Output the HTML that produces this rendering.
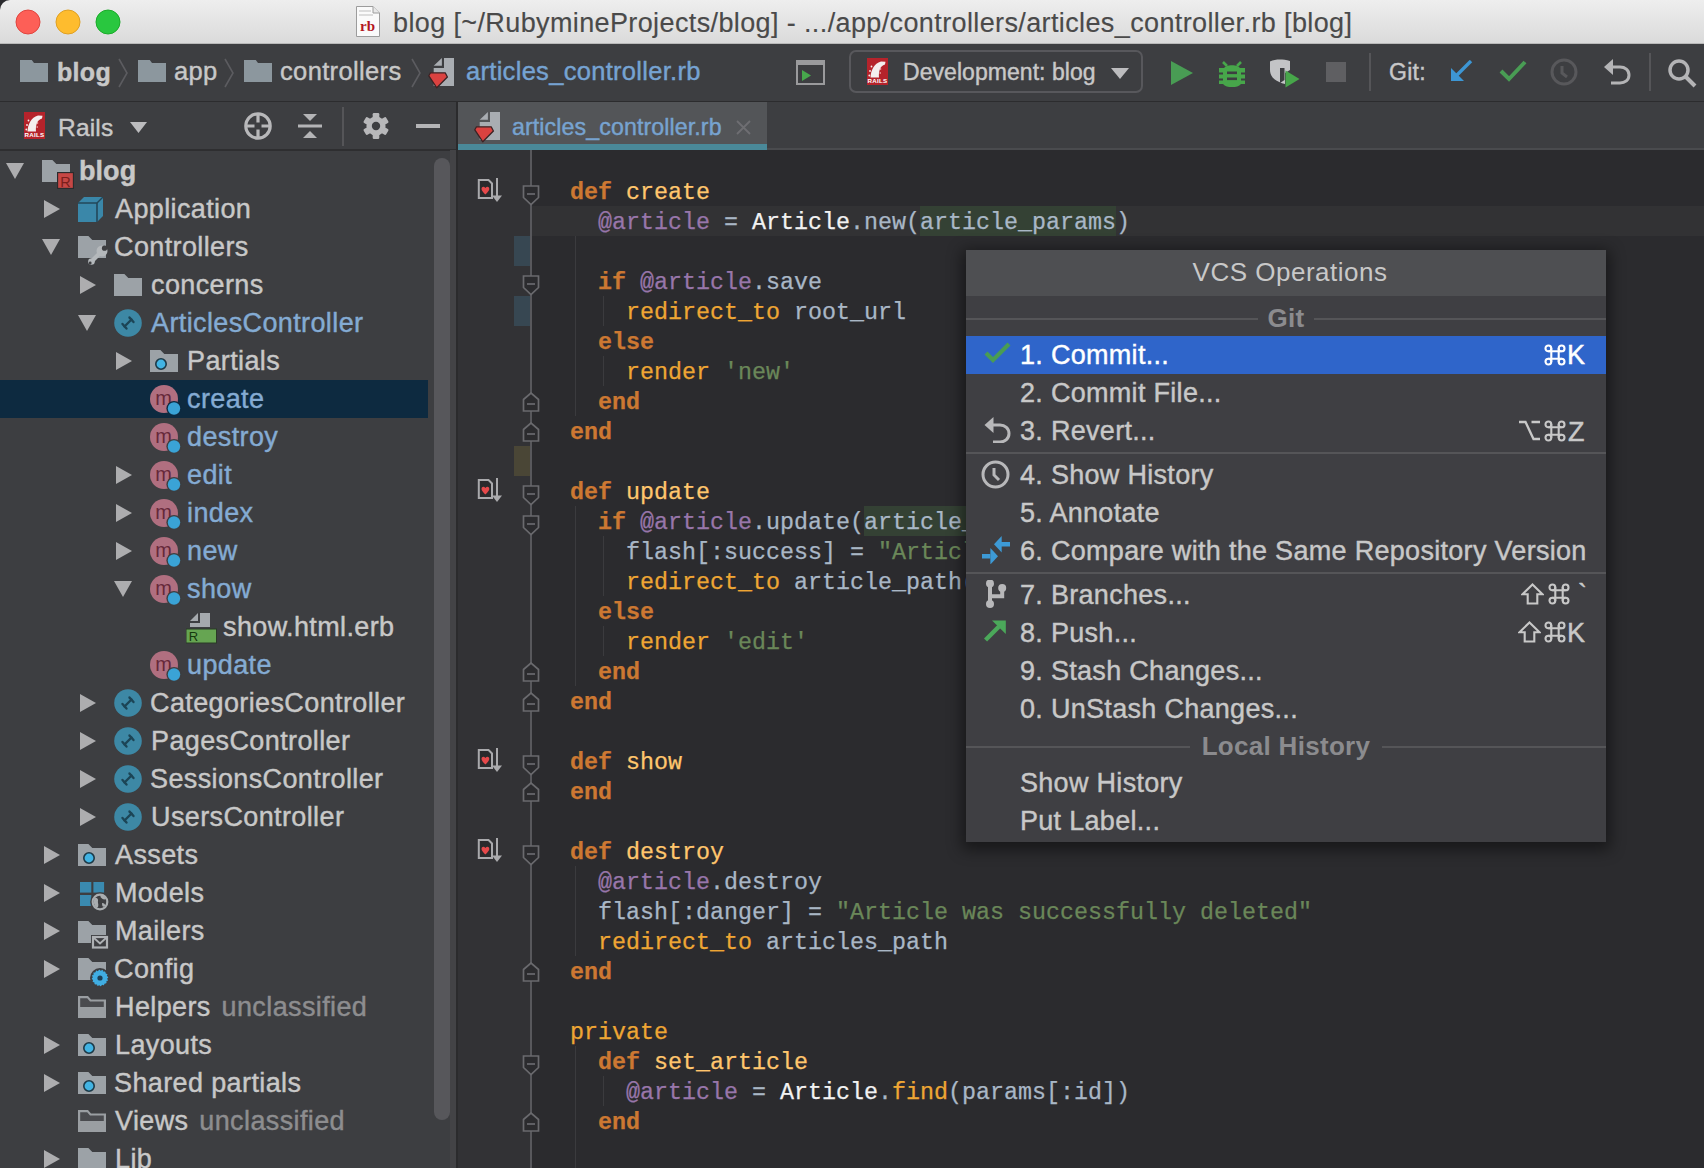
<!DOCTYPE html><html><head><meta charset="utf-8"><title>RubyMine</title></head><body style="margin:0;width:1704px;height:1168px;overflow:hidden;position:relative;background:#2b2b2e;font-family:'Liberation Sans', sans-serif"><div style="position:absolute;left:0px;top:0px;width:1704px;height:44px;background:linear-gradient(#eeeeee,#dadada);border-radius:10px 0 0 0;"></div>
<div style="position:absolute;left:0px;top:43px;width:1704px;height:1px;background:#b9b9b9"></div>
<svg style="position:absolute;left:15px;top:9px" width="26" height="26" viewBox="0 0 26 26"><circle cx="13" cy="13" r="12" fill="#fd5f57" stroke="#e0443e" stroke-width="1"/></svg>
<svg style="position:absolute;left:55px;top:9px" width="26" height="26" viewBox="0 0 26 26"><circle cx="13" cy="13" r="12" fill="#febc2e" stroke="#dfa023" stroke-width="1"/></svg>
<svg style="position:absolute;left:95px;top:9px" width="26" height="26" viewBox="0 0 26 26"><circle cx="13" cy="13" r="12" fill="#29c73f" stroke="#1aab29" stroke-width="1"/></svg>
<svg style="position:absolute;left:356px;top:6px" width="24" height="31" viewBox="0 0 24 31"><path d="M0.5 0.5 H17 L23.5 7 V30.5 H0.5 Z" fill="#fafafa" stroke="#9c9c9c"/><path d="M17 0.5 V7 H23.5" fill="#e8e8e8" stroke="#9c9c9c"/><rect x="3" y="4" width="12" height="2" fill="#dcdcdc"/><rect x="3" y="8" width="14" height="2" fill="#dcdcdc"/><text x="11.5" y="25" font-family="Liberation Serif" font-weight="bold" font-size="15" fill="#b3161e" text-anchor="middle">rb</text></svg>
<div style="position:absolute;left:393px;top:7.16px;font-family:'Liberation Sans', sans-serif;font-size:27px;line-height:32.40px;height:32.40px;color:#4a4a4a;font-weight:normal;letter-spacing:0.38px;white-space:pre;-webkit-text-stroke:0.15px #4a4a4a;">blog [~/RubymineProjects/blog] - .../app/controllers/articles_controller.rb [blog]</div>
<div style="position:absolute;left:0px;top:44px;width:1704px;height:57px;background:#3d3e41"></div>
<div style="position:absolute;left:0px;top:101px;width:1704px;height:1px;background:#2c2c2e"></div>
<svg style="position:absolute;left:20px;top:60px" width="28" height="22" viewBox="0 0 28 22"><defs><linearGradient id="fg" x1="0" y1="0" x2="1" y2="1"><stop offset="0" stop-color="#8a959c"/><stop offset="1" stop-color="#8e9296"/></linearGradient></defs><path d="M0 0 H11.8 L14.0 3 H28 V22 H0 Z" fill="#8c979e"/></svg>
<div style="position:absolute;left:57px;top:56.88px;font-family:'Liberation Sans', sans-serif;font-size:25px;line-height:30.00px;height:30.00px;color:#c8c8c8;font-weight:bold;letter-spacing:0.3px;white-space:pre;-webkit-text-stroke:0.42px #c8c8c8;">blog</div>
<svg style="position:absolute;left:118px;top:58px" width="10" height="30" viewBox="0 0 10 30"><path d="M1 1 L9 15 L1 29" fill="none" stroke="#5c5c60" stroke-width="1.6"/></svg>
<svg style="position:absolute;left:138px;top:60px" width="28" height="22" viewBox="0 0 28 22"><defs><linearGradient id="fg" x1="0" y1="0" x2="1" y2="1"><stop offset="0" stop-color="#8a959c"/><stop offset="1" stop-color="#8e9296"/></linearGradient></defs><path d="M0 0 H11.8 L14.0 3 H28 V22 H0 Z" fill="#8c979e"/></svg>
<div style="position:absolute;left:174px;top:56.42px;font-family:'Liberation Sans', sans-serif;font-size:25.5px;line-height:30.60px;height:30.60px;color:#c8c8c8;font-weight:normal;letter-spacing:0.3px;white-space:pre;-webkit-text-stroke:0.42px #c8c8c8;">app</div>
<svg style="position:absolute;left:224px;top:58px" width="10" height="30" viewBox="0 0 10 30"><path d="M1 1 L9 15 L1 29" fill="none" stroke="#5c5c60" stroke-width="1.6"/></svg>
<svg style="position:absolute;left:244px;top:60px" width="28" height="22" viewBox="0 0 28 22"><defs><linearGradient id="fg" x1="0" y1="0" x2="1" y2="1"><stop offset="0" stop-color="#8a959c"/><stop offset="1" stop-color="#8e9296"/></linearGradient></defs><path d="M0 0 H11.8 L14.0 3 H28 V22 H0 Z" fill="#8c979e"/></svg>
<div style="position:absolute;left:280px;top:56.42px;font-family:'Liberation Sans', sans-serif;font-size:25.5px;line-height:30.60px;height:30.60px;color:#c8c8c8;font-weight:normal;letter-spacing:0.35px;white-space:pre;-webkit-text-stroke:0.42px #c8c8c8;">controllers</div>
<svg style="position:absolute;left:411px;top:58px" width="10" height="30" viewBox="0 0 10 30"><path d="M1 1 L9 15 L1 29" fill="none" stroke="#5c5c60" stroke-width="1.6"/></svg>
<svg style="position:absolute;left:428px;top:58px" width="27" height="31" viewBox="0 0 27 31"><path d="M16 0 H26 V28 H16 Z" fill="#a9adb2"/><path d="M5.7 7.7 L13.9 0 V7.7 Z" fill="#a9adb2"/><path d="M5.7 10 H16 V28 H5.7 Z" fill="#a9adb2"/><path d="M0.8 17.8 L2.5 14.8 H17.2 L19.4 19 L8.8 29.8 Z" fill="#db4240" stroke="#3b2324" stroke-width="1.3" stroke-linejoin="round"/></svg>
<div style="position:absolute;left:466px;top:56.42px;font-family:'Liberation Sans', sans-serif;font-size:25.5px;line-height:30.60px;height:30.60px;color:#76a3d2;font-weight:normal;letter-spacing:0.3px;white-space:pre;-webkit-text-stroke:0.42px #76a3d2;">articles_controller.rb</div>
<svg style="position:absolute;left:796px;top:60px" width="29" height="25" viewBox="0 0 29 25"><rect x="1" y="1" width="27" height="23" fill="none" stroke="#9a9a9c" stroke-width="2"/><rect x="1" y="1" width="27" height="4" fill="#9a9a9c"/><path d="M6 10 L15 15.5 L6 21 Z" fill="#47a84c"/></svg>
<div style="position:absolute;left:849px;top:50px;width:294px;height:43px;box-sizing:border-box;border:2px solid #58585c;border-radius:7px;"></div>
<svg style="position:absolute;left:867px;top:58px" width="21" height="27" viewBox="0 0 21 27"><rect x="0" y="0" width="21" height="27" fill="#b5232b"/><path d="M3.5 19.5 C4 12 7 5.5 14 3.5 L18.5 3.8 L18 6.5 C13 8 11.5 13 12 19.5 Z" fill="#f4eeee"/><circle cx="4.5" cy="8.5" r="0.9" fill="#f4eeee"/><circle cx="3" cy="13" r="0.9" fill="#f4eeee"/><circle cx="2.3" cy="17.5" r="0.9" fill="#f4eeee"/><circle cx="13.5" cy="11" r="0.8" fill="#f7c0c0"/><circle cx="13.2" cy="15" r="0.8" fill="#f7c0c0"/><text x="10.5" y="25.4" font-family="Liberation Sans" font-weight="bold" font-size="6.2" fill="#fff" text-anchor="middle" letter-spacing="0.3">RAILS</text></svg>
<div style="position:absolute;left:903px;top:59.39px;font-family:'Liberation Sans', sans-serif;font-size:23px;line-height:27.60px;height:27.60px;color:#c8c8c8;font-weight:normal;letter-spacing:0.05px;white-space:pre;-webkit-text-stroke:0.42px #c8c8c8;">Development: blog</div>
<svg style="position:absolute;left:1111px;top:68px" width="18" height="11" viewBox="0 0 18 11"><path d="M0 0 H18 L9.0 11 Z" fill="#bcbcbe"/></svg>
<svg style="position:absolute;left:1171px;top:61px" width="22" height="24" viewBox="0 0 22 24"><path d="M0 0 L22 12 L0 24 Z" fill="#499c54"/></svg>
<svg style="position:absolute;left:1219px;top:57px" width="26" height="30" viewBox="0 0 26 30"><g fill="#47a64a"><path d="M4 5 L8 9 M22 5 L18 9" stroke="#47a64a" stroke-width="2.6"/><path d="M5 12 C5 7 21 7 21 12 Z"/><path d="M0 11 H26 V27 H22 C20 29.5 17 30 13 30 C9 30 6 29.5 4 27 H0 Z"/></g><g fill="#3d3e41"><rect x="0" y="15.5" width="4" height="2"/><rect x="22" y="15.5" width="4" height="2"/><rect x="0" y="21.5" width="4" height="2"/><rect x="22" y="21.5" width="4" height="2"/><rect x="8" y="14.5" width="10" height="2.6"/><rect x="8" y="20.5" width="10" height="2.6"/></g></svg>
<svg style="position:absolute;left:1269px;top:59px" width="32" height="30" viewBox="0 0 32 30"><path d="M1 2.5 C7 0 13 0 21 2 V11 L16 14 V25 C8 23 1 19 1 11 Z" fill="#c3c4c6"/><path d="M11 9 H15.5 V21 L11 24 Z" fill="#3d3e41"/><path d="M16.5 11.5 L30.5 20 L16.5 28.5 Z" fill="#47a64a"/></svg>
<div style="position:absolute;left:1326px;top:62px;width:20px;height:20px;background:#5f5f62"></div>
<div style="position:absolute;left:1369px;top:53px;width:1.5px;height:38px;background:#555558"></div>
<div style="position:absolute;left:1389px;top:59.39px;font-family:'Liberation Sans', sans-serif;font-size:23px;line-height:27.60px;height:27.60px;color:#c8c8c8;font-weight:normal;letter-spacing:0.3px;white-space:pre;-webkit-text-stroke:0.42px #c8c8c8;">Git:</div>
<svg style="position:absolute;left:1449px;top:60px" width="24" height="23" viewBox="0 0 24 23"><path d="M22 1 L6 17" stroke="#3d96d4" stroke-width="3.4" fill="none"/><path d="M2 8 V21 H15 Z" fill="#3d96d4"/></svg>
<svg style="position:absolute;left:1499px;top:60px" width="28" height="22" viewBox="0 0 28 22"><path d="M2 11 L10 19 L26 2" stroke="#499c54" stroke-width="4" fill="none"/></svg>
<svg style="position:absolute;left:1550px;top:58px" width="28" height="28" viewBox="0 0 28 28"><circle cx="14" cy="14" r="12" stroke="#58585b" stroke-width="3" fill="none"/><path d="M12 8 V15 L17 19" stroke="#58585b" stroke-width="3" fill="none"/></svg>
<svg style="position:absolute;left:1603px;top:58px" width="28" height="27" viewBox="0 0 28 27"><path d="M8 9 H17 C22 9 26 12 26 17 C26 22 22 25 17 25 H8" stroke="#b4b4b6" stroke-width="3" fill="none"/><path d="M1 9 L10 1 V17 Z" fill="#b4b4b6"/></svg>
<div style="position:absolute;left:1649px;top:53px;width:1.5px;height:38px;background:#555558"></div>
<svg style="position:absolute;left:1667px;top:58px" width="30" height="30" viewBox="0 0 30 30"><circle cx="12" cy="12" r="9" stroke="#b4b4b6" stroke-width="3.5" fill="none"/><path d="M18.5 18.5 L28 28" stroke="#b4b4b6" stroke-width="4" fill="none"/></svg>
<div style="position:absolute;left:0px;top:102px;width:456px;height:1066px;background:#3d3e41"></div>
<div style="position:absolute;left:0px;top:149px;width:456px;height:1.5px;background:#2e2e30"></div>
<svg style="position:absolute;left:24px;top:112px" width="21" height="27" viewBox="0 0 21 27"><rect x="0" y="0" width="21" height="27" fill="#b5232b"/><path d="M3.5 19.5 C4 12 7 5.5 14 3.5 L18.5 3.8 L18 6.5 C13 8 11.5 13 12 19.5 Z" fill="#f4eeee"/><circle cx="4.5" cy="8.5" r="0.9" fill="#f4eeee"/><circle cx="3" cy="13" r="0.9" fill="#f4eeee"/><circle cx="2.3" cy="17.5" r="0.9" fill="#f4eeee"/><circle cx="13.5" cy="11" r="0.8" fill="#f7c0c0"/><circle cx="13.2" cy="15" r="0.8" fill="#f7c0c0"/><text x="10.5" y="25.4" font-family="Liberation Sans" font-weight="bold" font-size="6.2" fill="#fff" text-anchor="middle" letter-spacing="0.3">RAILS</text></svg>
<div style="position:absolute;left:58px;top:112.83px;font-family:'Liberation Sans', sans-serif;font-size:24.5px;line-height:29.40px;height:29.40px;color:#c8c8c8;font-weight:normal;letter-spacing:0.2px;white-space:pre;-webkit-text-stroke:0.42px #c8c8c8;">Rails</div>
<svg style="position:absolute;left:130px;top:122px" width="17" height="11" viewBox="0 0 17 11"><path d="M0 0 H17 L8.5 11 Z" fill="#bcbcbe"/></svg>
<svg style="position:absolute;left:244px;top:112px" width="28" height="28" viewBox="0 0 28 28"><circle cx="14" cy="14" r="12.2" stroke="#b8b8ba" stroke-width="3.2" fill="none"/><path d="M14 2 V10.5 M14 17.5 V26 M2 14 H10.5 M17.5 14 H26" stroke="#b8b8ba" stroke-width="3.2"/></svg>
<svg style="position:absolute;left:298px;top:114px" width="24" height="24" viewBox="0 0 24 24"><path d="M5 0 H19 L12 7 Z" fill="#b4b4b6"/><rect x="0" y="10.5" width="24" height="3" fill="#b4b4b6"/><path d="M5 24 H19 L12 17 Z" fill="#b4b4b6"/></svg>
<div style="position:absolute;left:342px;top:107px;width:1.5px;height:39px;background:#555558"></div>
<svg style="position:absolute;left:363px;top:113px" width="26" height="26" viewBox="0 0 26 26"><g fill="#b8b8ba" transform="translate(13 13)"><rect x="-3.3" y="-13" width="6.6" height="7" rx="1.2" transform="rotate(0)"/><rect x="-3.3" y="-13" width="6.6" height="7" rx="1.2" transform="rotate(60)"/><rect x="-3.3" y="-13" width="6.6" height="7" rx="1.2" transform="rotate(120)"/><rect x="-3.3" y="-13" width="6.6" height="7" rx="1.2" transform="rotate(180)"/><rect x="-3.3" y="-13" width="6.6" height="7" rx="1.2" transform="rotate(240)"/><rect x="-3.3" y="-13" width="6.6" height="7" rx="1.2" transform="rotate(300)"/><circle r="9.6"/></g><circle cx="13" cy="13" r="4.2" fill="#3d3e41"/></svg>
<div style="position:absolute;left:416px;top:124px;width:24px;height:3.5px;background:#b4b4b6"></div>
<svg style="position:absolute;left:6px;top:163px" width="18" height="16" viewBox="0 0 18 16"><path d="M0 0 H18 L9.0 16 Z" fill="#adadaf"/></svg>
<svg style="position:absolute;left:42px;top:160px" width="28" height="22" viewBox="0 0 28 22"><path d="M0 0 H10.4 L14.3 4 H28 V22 H0 Z" fill="#9ca2a7"/></svg><svg style="position:absolute;left:57px;top:172px" width="17" height="17" viewBox="0 0 17 17"><rect x="0.5" y="0.5" width="16" height="16" fill="#c64745" stroke="#2b2b2d" stroke-width="1.3"/><text x="8.5" y="14.5" font-family="Liberation Sans" font-size="14.5" fill="#7a1f1c" text-anchor="middle">R</text></svg>
<div style="position:absolute;left:79px;top:155.16px;font-family:'Liberation Sans', sans-serif;font-size:27px;line-height:32.40px;height:32.40px;color:#c8c8c8;font-weight:bold;letter-spacing:0.05px;white-space:pre;-webkit-text-stroke:0.42px #c8c8c8;">blog</div>
<svg style="position:absolute;left:44px;top:200px" width="16" height="18" viewBox="0 0 16 18"><path d="M0 0 L16 9.0 L0 18 Z" fill="#adadaf"/></svg>
<svg style="position:absolute;left:78px;top:197px" width="25" height="25" viewBox="0 0 25 25"><path d="M0 6 L6 0 H25 V19 L19 25 H0 Z" fill="#3a87a9"/><path d="M0 6 H19 V25" stroke="#23485a" stroke-width="1.6" fill="none"/><path d="M19 6 L25 0" stroke="#23485a" stroke-width="1.4"/></svg>
<div style="position:absolute;left:115px;top:193.16px;font-family:'Liberation Sans', sans-serif;font-size:27px;line-height:32.40px;height:32.40px;color:#c8c8c8;font-weight:normal;letter-spacing:0.38px;white-space:pre;-webkit-text-stroke:0.42px #c8c8c8;">Application</div>
<svg style="position:absolute;left:42px;top:239px" width="18" height="16" viewBox="0 0 18 16"><path d="M0 0 H18 L9.0 16 Z" fill="#adadaf"/></svg>
<svg style="position:absolute;left:78px;top:236px" width="28" height="22" viewBox="0 0 28 22"><path d="M0 0 H10.4 L14.3 4 H28 V22 H0 Z" fill="#9ca2a7"/></svg><svg style="position:absolute;left:88px;top:245px" width="20" height="20" viewBox="0 0 20 20"><path d="M0 0 H20 V20 H0 Z" fill="none"/><path d="M4 16 L13 7" stroke="#b4b8bb" stroke-width="4.2" stroke-linecap="round"/><circle cx="14" cy="6" r="5.5" fill="#b4b8bb"/><circle cx="16.5" cy="3.2" r="2.6" fill="#3d3e41"/><circle cx="3.5" cy="16.5" r="3.3" fill="#b4b8bb"/><circle cx="2.2" cy="18" r="1.4" fill="#3d3e41"/></svg>
<div style="position:absolute;left:114px;top:231.16px;font-family:'Liberation Sans', sans-serif;font-size:27px;line-height:32.40px;height:32.40px;color:#c8c8c8;font-weight:normal;letter-spacing:0.38px;white-space:pre;-webkit-text-stroke:0.42px #c8c8c8;">Controllers</div>
<svg style="position:absolute;left:80px;top:276px" width="16" height="18" viewBox="0 0 16 18"><path d="M0 0 L16 9.0 L0 18 Z" fill="#adadaf"/></svg>
<svg style="position:absolute;left:114px;top:274px" width="28" height="22" viewBox="0 0 28 22"><path d="M0 0 H10.4 L14.3 4 H28 V22 H0 Z" fill="#9ca2a7"/></svg>
<div style="position:absolute;left:151px;top:269.17px;font-family:'Liberation Sans', sans-serif;font-size:27px;line-height:32.40px;height:32.40px;color:#c8c8c8;font-weight:normal;letter-spacing:0.38px;white-space:pre;-webkit-text-stroke:0.42px #c8c8c8;">concerns</div>
<svg style="position:absolute;left:78px;top:315px" width="18" height="16" viewBox="0 0 18 16"><path d="M0 0 H18 L9.0 16 Z" fill="#adadaf"/></svg>
<svg style="position:absolute;left:114px;top:309px" width="28" height="28" viewBox="0 0 28 28"><circle cx="14" cy="14" r="13.8" fill="#3d88a5"/><g stroke="#1c4556" stroke-width="2.4" fill="none" stroke-linecap="round"><path d="M10.5 17.5 L17.5 10.5"/><path d="M8.5 15 L12.5 19.5"/><path d="M15.5 8.5 L19.5 13"/></g></svg>
<div style="position:absolute;left:151px;top:307.17px;font-family:'Liberation Sans', sans-serif;font-size:27px;line-height:32.40px;height:32.40px;color:#84abd3;font-weight:normal;letter-spacing:0.38px;white-space:pre;-webkit-text-stroke:0.42px #84abd3;">ArticlesController</div>
<svg style="position:absolute;left:116px;top:352px" width="16" height="18" viewBox="0 0 16 18"><path d="M0 0 L16 9.0 L0 18 Z" fill="#adadaf"/></svg>
<svg style="position:absolute;left:150px;top:350px" width="28" height="22" viewBox="0 0 28 22"><path d="M0 0 H10.4 L14.3 4 H28 V22 H0 Z" fill="#9ca2a7"/></svg><svg style="position:absolute;left:154px;top:357px" width="14" height="14" viewBox="0 0 14 14"><circle cx="7" cy="7" r="5.2" fill="#42b4e3" stroke="#1d3a48" stroke-width="1.6"/></svg>
<div style="position:absolute;left:187px;top:345.17px;font-family:'Liberation Sans', sans-serif;font-size:27px;line-height:32.40px;height:32.40px;color:#c8c8c8;font-weight:normal;letter-spacing:0.38px;white-space:pre;-webkit-text-stroke:0.42px #c8c8c8;">Partials</div>
<div style="position:absolute;left:0px;top:380px;width:428px;height:38px;background:#0d2a40"></div>
<svg style="position:absolute;left:150px;top:385px" width="34" height="34" viewBox="0 0 34 34"><circle cx="14" cy="14" r="14" fill="#b06f80"/><text x="13.5" y="20" font-family="Liberation Sans" font-size="20" fill="#66283a" text-anchor="middle">m</text><circle cx="24" cy="23.5" r="7.6" fill="#0d2a40"/><circle cx="24" cy="23.5" r="6.2" fill="#3aa3d6"/></svg>
<div style="position:absolute;left:187px;top:383.17px;font-family:'Liberation Sans', sans-serif;font-size:27px;line-height:32.40px;height:32.40px;color:#84abd3;font-weight:normal;letter-spacing:0.38px;white-space:pre;-webkit-text-stroke:0.42px #84abd3;">create</div>
<svg style="position:absolute;left:150px;top:423px" width="34" height="34" viewBox="0 0 34 34"><circle cx="14" cy="14" r="14" fill="#b06f80"/><text x="13.5" y="20" font-family="Liberation Sans" font-size="20" fill="#66283a" text-anchor="middle">m</text><circle cx="24" cy="23.5" r="7.6" fill="#3d3e41"/><circle cx="24" cy="23.5" r="6.2" fill="#3aa3d6"/></svg>
<div style="position:absolute;left:187px;top:421.17px;font-family:'Liberation Sans', sans-serif;font-size:27px;line-height:32.40px;height:32.40px;color:#84abd3;font-weight:normal;letter-spacing:0.38px;white-space:pre;-webkit-text-stroke:0.42px #84abd3;">destroy</div>
<svg style="position:absolute;left:116px;top:466px" width="16" height="18" viewBox="0 0 16 18"><path d="M0 0 L16 9.0 L0 18 Z" fill="#adadaf"/></svg>
<svg style="position:absolute;left:150px;top:461px" width="34" height="34" viewBox="0 0 34 34"><circle cx="14" cy="14" r="14" fill="#b06f80"/><text x="13.5" y="20" font-family="Liberation Sans" font-size="20" fill="#66283a" text-anchor="middle">m</text><circle cx="24" cy="23.5" r="7.6" fill="#3d3e41"/><circle cx="24" cy="23.5" r="6.2" fill="#3aa3d6"/></svg>
<div style="position:absolute;left:187px;top:459.17px;font-family:'Liberation Sans', sans-serif;font-size:27px;line-height:32.40px;height:32.40px;color:#84abd3;font-weight:normal;letter-spacing:0.38px;white-space:pre;-webkit-text-stroke:0.42px #84abd3;">edit</div>
<svg style="position:absolute;left:116px;top:504px" width="16" height="18" viewBox="0 0 16 18"><path d="M0 0 L16 9.0 L0 18 Z" fill="#adadaf"/></svg>
<svg style="position:absolute;left:150px;top:499px" width="34" height="34" viewBox="0 0 34 34"><circle cx="14" cy="14" r="14" fill="#b06f80"/><text x="13.5" y="20" font-family="Liberation Sans" font-size="20" fill="#66283a" text-anchor="middle">m</text><circle cx="24" cy="23.5" r="7.6" fill="#3d3e41"/><circle cx="24" cy="23.5" r="6.2" fill="#3aa3d6"/></svg>
<div style="position:absolute;left:187px;top:497.17px;font-family:'Liberation Sans', sans-serif;font-size:27px;line-height:32.40px;height:32.40px;color:#84abd3;font-weight:normal;letter-spacing:0.38px;white-space:pre;-webkit-text-stroke:0.42px #84abd3;">index</div>
<svg style="position:absolute;left:116px;top:542px" width="16" height="18" viewBox="0 0 16 18"><path d="M0 0 L16 9.0 L0 18 Z" fill="#adadaf"/></svg>
<svg style="position:absolute;left:150px;top:537px" width="34" height="34" viewBox="0 0 34 34"><circle cx="14" cy="14" r="14" fill="#b06f80"/><text x="13.5" y="20" font-family="Liberation Sans" font-size="20" fill="#66283a" text-anchor="middle">m</text><circle cx="24" cy="23.5" r="7.6" fill="#3d3e41"/><circle cx="24" cy="23.5" r="6.2" fill="#3aa3d6"/></svg>
<div style="position:absolute;left:187px;top:535.16px;font-family:'Liberation Sans', sans-serif;font-size:27px;line-height:32.40px;height:32.40px;color:#84abd3;font-weight:normal;letter-spacing:0.38px;white-space:pre;-webkit-text-stroke:0.42px #84abd3;">new</div>
<svg style="position:absolute;left:114px;top:581px" width="18" height="16" viewBox="0 0 18 16"><path d="M0 0 H18 L9.0 16 Z" fill="#adadaf"/></svg>
<svg style="position:absolute;left:150px;top:575px" width="34" height="34" viewBox="0 0 34 34"><circle cx="14" cy="14" r="14" fill="#b06f80"/><text x="13.5" y="20" font-family="Liberation Sans" font-size="20" fill="#66283a" text-anchor="middle">m</text><circle cx="24" cy="23.5" r="7.6" fill="#3d3e41"/><circle cx="24" cy="23.5" r="6.2" fill="#3aa3d6"/></svg>
<div style="position:absolute;left:187px;top:573.16px;font-family:'Liberation Sans', sans-serif;font-size:27px;line-height:32.40px;height:32.40px;color:#84abd3;font-weight:normal;letter-spacing:0.38px;white-space:pre;-webkit-text-stroke:0.42px #84abd3;">show</div>
<svg style="position:absolute;left:186px;top:613px" width="32" height="32" viewBox="0 0 32 32"><path d="M14 0 H24 V14 H14 Z" fill="#a5a9ad"/><path d="M4 8 L12 0 V8 Z" fill="#a5a9ad"/><path d="M4 10 H24 V14 H4 Z" fill="#a5a9ad"/><rect x="0" y="16" width="30.5" height="14" fill="#66a552" stroke="#2a3a26" stroke-width="1"/><text x="7.5" y="28.2" font-family="Liberation Sans" font-size="13" fill="#16380f" text-anchor="middle">R</text></svg>
<div style="position:absolute;left:223px;top:611.16px;font-family:'Liberation Sans', sans-serif;font-size:27px;line-height:32.40px;height:32.40px;color:#c8c8c8;font-weight:normal;letter-spacing:0.38px;white-space:pre;-webkit-text-stroke:0.42px #c8c8c8;">show.html.erb</div>
<svg style="position:absolute;left:150px;top:651px" width="34" height="34" viewBox="0 0 34 34"><circle cx="14" cy="14" r="14" fill="#b06f80"/><text x="13.5" y="20" font-family="Liberation Sans" font-size="20" fill="#66283a" text-anchor="middle">m</text><circle cx="24" cy="23.5" r="7.6" fill="#3d3e41"/><circle cx="24" cy="23.5" r="6.2" fill="#3aa3d6"/></svg>
<div style="position:absolute;left:187px;top:649.16px;font-family:'Liberation Sans', sans-serif;font-size:27px;line-height:32.40px;height:32.40px;color:#84abd3;font-weight:normal;letter-spacing:0.38px;white-space:pre;-webkit-text-stroke:0.42px #84abd3;">update</div>
<svg style="position:absolute;left:80px;top:694px" width="16" height="18" viewBox="0 0 16 18"><path d="M0 0 L16 9.0 L0 18 Z" fill="#adadaf"/></svg>
<svg style="position:absolute;left:114px;top:689px" width="28" height="28" viewBox="0 0 28 28"><circle cx="14" cy="14" r="13.8" fill="#3d88a5"/><g stroke="#1c4556" stroke-width="2.4" fill="none" stroke-linecap="round"><path d="M10.5 17.5 L17.5 10.5"/><path d="M8.5 15 L12.5 19.5"/><path d="M15.5 8.5 L19.5 13"/></g></svg>
<div style="position:absolute;left:150px;top:687.16px;font-family:'Liberation Sans', sans-serif;font-size:27px;line-height:32.40px;height:32.40px;color:#c8c8c8;font-weight:normal;letter-spacing:0.38px;white-space:pre;-webkit-text-stroke:0.42px #c8c8c8;">CategoriesController</div>
<svg style="position:absolute;left:80px;top:732px" width="16" height="18" viewBox="0 0 16 18"><path d="M0 0 L16 9.0 L0 18 Z" fill="#adadaf"/></svg>
<svg style="position:absolute;left:114px;top:727px" width="28" height="28" viewBox="0 0 28 28"><circle cx="14" cy="14" r="13.8" fill="#3d88a5"/><g stroke="#1c4556" stroke-width="2.4" fill="none" stroke-linecap="round"><path d="M10.5 17.5 L17.5 10.5"/><path d="M8.5 15 L12.5 19.5"/><path d="M15.5 8.5 L19.5 13"/></g></svg>
<div style="position:absolute;left:151px;top:725.16px;font-family:'Liberation Sans', sans-serif;font-size:27px;line-height:32.40px;height:32.40px;color:#c8c8c8;font-weight:normal;letter-spacing:0.38px;white-space:pre;-webkit-text-stroke:0.42px #c8c8c8;">PagesController</div>
<svg style="position:absolute;left:80px;top:770px" width="16" height="18" viewBox="0 0 16 18"><path d="M0 0 L16 9.0 L0 18 Z" fill="#adadaf"/></svg>
<svg style="position:absolute;left:114px;top:765px" width="28" height="28" viewBox="0 0 28 28"><circle cx="14" cy="14" r="13.8" fill="#3d88a5"/><g stroke="#1c4556" stroke-width="2.4" fill="none" stroke-linecap="round"><path d="M10.5 17.5 L17.5 10.5"/><path d="M8.5 15 L12.5 19.5"/><path d="M15.5 8.5 L19.5 13"/></g></svg>
<div style="position:absolute;left:150px;top:763.16px;font-family:'Liberation Sans', sans-serif;font-size:27px;line-height:32.40px;height:32.40px;color:#c8c8c8;font-weight:normal;letter-spacing:0.38px;white-space:pre;-webkit-text-stroke:0.42px #c8c8c8;">SessionsController</div>
<svg style="position:absolute;left:80px;top:808px" width="16" height="18" viewBox="0 0 16 18"><path d="M0 0 L16 9.0 L0 18 Z" fill="#adadaf"/></svg>
<svg style="position:absolute;left:114px;top:803px" width="28" height="28" viewBox="0 0 28 28"><circle cx="14" cy="14" r="13.8" fill="#3d88a5"/><g stroke="#1c4556" stroke-width="2.4" fill="none" stroke-linecap="round"><path d="M10.5 17.5 L17.5 10.5"/><path d="M8.5 15 L12.5 19.5"/><path d="M15.5 8.5 L19.5 13"/></g></svg>
<div style="position:absolute;left:151px;top:801.16px;font-family:'Liberation Sans', sans-serif;font-size:27px;line-height:32.40px;height:32.40px;color:#c8c8c8;font-weight:normal;letter-spacing:0.38px;white-space:pre;-webkit-text-stroke:0.42px #c8c8c8;">UsersController</div>
<svg style="position:absolute;left:44px;top:846px" width="16" height="18" viewBox="0 0 16 18"><path d="M0 0 L16 9.0 L0 18 Z" fill="#adadaf"/></svg>
<svg style="position:absolute;left:78px;top:844px" width="28" height="22" viewBox="0 0 28 22"><path d="M0 0 H10.4 L14.3 4 H28 V22 H0 Z" fill="#9ca2a7"/></svg><svg style="position:absolute;left:82px;top:851px" width="14" height="14" viewBox="0 0 14 14"><circle cx="7" cy="7" r="5.2" fill="#42b4e3" stroke="#1d3a48" stroke-width="1.6"/></svg>
<div style="position:absolute;left:115px;top:839.16px;font-family:'Liberation Sans', sans-serif;font-size:27px;line-height:32.40px;height:32.40px;color:#c8c8c8;font-weight:normal;letter-spacing:0.38px;white-space:pre;-webkit-text-stroke:0.42px #c8c8c8;">Assets</div>
<svg style="position:absolute;left:44px;top:884px" width="16" height="18" viewBox="0 0 16 18"><path d="M0 0 L16 9.0 L0 18 Z" fill="#adadaf"/></svg>
<svg style="position:absolute;left:80px;top:882px" width="30" height="30" viewBox="0 0 30 30"><rect x="0" y="0" width="11.3" height="10.6" fill="#3a8ab0"/><rect x="13.4" y="0" width="10.7" height="10.6" fill="#3a8ab0"/><rect x="0" y="13" width="11.3" height="11" fill="#3a8ab0"/><circle cx="20" cy="20" r="9.8" fill="#3d3e41"/><circle cx="20" cy="20" r="7.3" fill="none" stroke="#a9adb0" stroke-width="2.2"/><path d="M14.5 16 C16.5 15 18.5 16.5 18 19 C17.5 21 19 22 18 25 L16 26 C14 23 13 19 14.5 16 Z M20.5 13 C22.5 13 25 14.5 26 17 C24 18 22 17 20.5 15 Z M22 21 C24 21 25.5 22 25 24 C23.5 25.5 22 25 22 21 Z" fill="#a9adb0"/></svg>
<div style="position:absolute;left:115px;top:877.16px;font-family:'Liberation Sans', sans-serif;font-size:27px;line-height:32.40px;height:32.40px;color:#c8c8c8;font-weight:normal;letter-spacing:0.38px;white-space:pre;-webkit-text-stroke:0.42px #c8c8c8;">Models</div>
<svg style="position:absolute;left:44px;top:922px" width="16" height="18" viewBox="0 0 16 18"><path d="M0 0 L16 9.0 L0 18 Z" fill="#adadaf"/></svg>
<svg style="position:absolute;left:78px;top:921px" width="28" height="22" viewBox="0 0 28 22"><path d="M0 0 H10.4 L14.3 4 H28 V22 H0 Z" fill="#9ca2a7"/></svg><svg style="position:absolute;left:91px;top:935px" width="18" height="14" viewBox="0 0 18 14"><rect x="0" y="0" width="18" height="14" fill="#3d3e41"/><rect x="2" y="2" width="14" height="10.5" fill="none" stroke="#aeb1b4" stroke-width="2.2"/><path d="M3 3 L9 8.5 L15 3" stroke="#aeb1b4" stroke-width="1.9" fill="none"/></svg>
<div style="position:absolute;left:115px;top:915.16px;font-family:'Liberation Sans', sans-serif;font-size:27px;line-height:32.40px;height:32.40px;color:#c8c8c8;font-weight:normal;letter-spacing:0.38px;white-space:pre;-webkit-text-stroke:0.42px #c8c8c8;">Mailers</div>
<svg style="position:absolute;left:44px;top:960px" width="16" height="18" viewBox="0 0 16 18"><path d="M0 0 L16 9.0 L0 18 Z" fill="#adadaf"/></svg>
<svg style="position:absolute;left:78px;top:958px" width="28" height="22" viewBox="0 0 28 22"><path d="M0 0 H10.4 L14.3 4 H28 V22 H0 Z" fill="#9ca2a7"/></svg><svg style="position:absolute;left:90px;top:968px" width="20" height="20" viewBox="0 0 20 20"><circle cx="10" cy="10" r="10" fill="#3d3e41"/><circle cx="10" cy="10" r="8.2" fill="#40ade2"/><circle cx="10" cy="10" r="8.2" fill="none" stroke="#3d3e41" stroke-width="1.6" stroke-dasharray="1.6 1.6"/><circle cx="10" cy="10" r="2.6" fill="#1d3f55"/></svg>
<div style="position:absolute;left:114px;top:953.16px;font-family:'Liberation Sans', sans-serif;font-size:27px;line-height:32.40px;height:32.40px;color:#c8c8c8;font-weight:normal;letter-spacing:0.38px;white-space:pre;-webkit-text-stroke:0.42px #c8c8c8;">Config</div>
<svg style="position:absolute;left:78px;top:996px" width="28" height="22" viewBox="0 0 28 22"><path d="M0 0 H10 L13 3.5 H28 V22 H0 Z" fill="#9a9ea2"/><path d="M2.2 2.2 H9.2 L12 5.6 H25.8 V11 H2.2 Z" fill="#4a4b4f"/></svg>
<div style="position:absolute;left:115px;top:991.16px;font-family:'Liberation Sans', sans-serif;font-size:27px;line-height:32.40px;height:32.40px;color:#c8c8c8;font-weight:normal;letter-spacing:0.38px;white-space:pre;-webkit-text-stroke:0.42px #c8c8c8;">Helpers <span style="color:#8d8d8f;-webkit-text-stroke-color:#8d8d8f;margin-left:3px">unclassified</span></div>
<svg style="position:absolute;left:44px;top:1036px" width="16" height="18" viewBox="0 0 16 18"><path d="M0 0 L16 9.0 L0 18 Z" fill="#adadaf"/></svg>
<svg style="position:absolute;left:78px;top:1034px" width="28" height="22" viewBox="0 0 28 22"><path d="M0 0 H10.4 L14.3 4 H28 V22 H0 Z" fill="#9ca2a7"/></svg><svg style="position:absolute;left:82px;top:1041px" width="14" height="14" viewBox="0 0 14 14"><circle cx="7" cy="7" r="5.2" fill="#42b4e3" stroke="#1d3a48" stroke-width="1.6"/></svg>
<div style="position:absolute;left:115px;top:1029.16px;font-family:'Liberation Sans', sans-serif;font-size:27px;line-height:32.40px;height:32.40px;color:#c8c8c8;font-weight:normal;letter-spacing:0.38px;white-space:pre;-webkit-text-stroke:0.42px #c8c8c8;">Layouts</div>
<svg style="position:absolute;left:44px;top:1074px" width="16" height="18" viewBox="0 0 16 18"><path d="M0 0 L16 9.0 L0 18 Z" fill="#adadaf"/></svg>
<svg style="position:absolute;left:78px;top:1072px" width="28" height="22" viewBox="0 0 28 22"><path d="M0 0 H10.4 L14.3 4 H28 V22 H0 Z" fill="#9ca2a7"/></svg><svg style="position:absolute;left:82px;top:1079px" width="14" height="14" viewBox="0 0 14 14"><circle cx="7" cy="7" r="5.2" fill="#42b4e3" stroke="#1d3a48" stroke-width="1.6"/></svg>
<div style="position:absolute;left:114px;top:1067.16px;font-family:'Liberation Sans', sans-serif;font-size:27px;line-height:32.40px;height:32.40px;color:#c8c8c8;font-weight:normal;letter-spacing:0.38px;white-space:pre;-webkit-text-stroke:0.42px #c8c8c8;">Shared partials</div>
<svg style="position:absolute;left:78px;top:1110px" width="28" height="22" viewBox="0 0 28 22"><path d="M0 0 H10 L13 3.5 H28 V22 H0 Z" fill="#9a9ea2"/><path d="M2.2 2.2 H9.2 L12 5.6 H25.8 V11 H2.2 Z" fill="#4a4b4f"/></svg>
<div style="position:absolute;left:115px;top:1105.16px;font-family:'Liberation Sans', sans-serif;font-size:27px;line-height:32.40px;height:32.40px;color:#c8c8c8;font-weight:normal;letter-spacing:0.38px;white-space:pre;-webkit-text-stroke:0.42px #c8c8c8;">Views <span style="color:#8d8d8f;-webkit-text-stroke-color:#8d8d8f;margin-left:3px">unclassified</span></div>
<svg style="position:absolute;left:44px;top:1150px" width="16" height="18" viewBox="0 0 16 18"><path d="M0 0 L16 9.0 L0 18 Z" fill="#adadaf"/></svg>
<svg style="position:absolute;left:78px;top:1148px" width="28" height="22" viewBox="0 0 28 22"><path d="M0 0 H10.4 L14.3 4 H28 V22 H0 Z" fill="#9ca2a7"/></svg>
<div style="position:absolute;left:115px;top:1143.16px;font-family:'Liberation Sans', sans-serif;font-size:27px;line-height:32.40px;height:32.40px;color:#c8c8c8;font-weight:normal;letter-spacing:0.38px;white-space:pre;-webkit-text-stroke:0.42px #c8c8c8;">Lib</div>
<div style="position:absolute;left:434px;top:158px;width:16px;height:962px;background:#57575b;border-radius:8px"></div>
<div style="position:absolute;left:450px;top:150px;width:6px;height:1018px;background:#434346"></div>
<div style="position:absolute;left:456px;top:102px;width:1248px;height:48px;background:#3d3e41"></div>
<div style="position:absolute;left:456px;top:148px;width:1248px;height:2px;background:#4a4b4e"></div>
<div style="position:absolute;left:456px;top:102px;width:2px;height:1066px;background:#2b2b2d"></div>
<div style="position:absolute;left:458px;top:102px;width:309px;height:43px;background:#535558"></div>
<div style="position:absolute;left:458px;top:144px;width:309px;height:6px;background:#4a8999"></div>
<svg style="position:absolute;left:474px;top:112px" width="27" height="31" viewBox="0 0 27 31"><path d="M16 0 H26 V28 H16 Z" fill="#a9adb2"/><path d="M5.7 7.7 L13.9 0 V7.7 Z" fill="#a9adb2"/><path d="M5.7 10 H16 V28 H5.7 Z" fill="#a9adb2"/><path d="M0.8 17.8 L2.5 14.8 H17.2 L19.4 19 L8.8 29.8 Z" fill="#db4240" stroke="#3b2324" stroke-width="1.3" stroke-linejoin="round"/></svg>
<div style="position:absolute;left:512px;top:114.00px;font-family:'Liberation Sans', sans-serif;font-size:23.2px;line-height:27.84px;height:27.84px;color:#77a3d0;font-weight:normal;letter-spacing:0.1px;white-space:pre;-webkit-text-stroke:0.42px #77a3d0;">articles_controller.rb</div>
<svg style="position:absolute;left:736px;top:120px" width="15" height="15" viewBox="0 0 15 15"><path d="M1 1 L14 14 M14 1 L1 14" stroke="#6e6e72" stroke-width="1.8"/></svg>
<div style="position:absolute;left:458px;top:150px;width:73px;height:1018px;background:#323235"></div>
<div style="position:absolute;left:531px;top:150px;width:1173px;height:1018px;background:#2b2b2e"></div>
<div style="position:absolute;left:532px;top:206px;width:1172px;height:30px;background:#323234"></div>
<div style="position:absolute;left:920px;top:206px;width:196px;height:30px;background:#344134"></div>
<div style="position:absolute;left:864px;top:506px;width:196px;height:30px;background:#344134"></div>
<div style="position:absolute;left:514px;top:236px;width:16px;height:30px;background:#374752"></div>
<div style="position:absolute;left:514px;top:296px;width:16px;height:30px;background:#374752"></div>
<div style="position:absolute;left:514px;top:446px;width:16px;height:30px;background:#4a4636"></div>
<div style="position:absolute;left:530px;top:150px;width:2px;height:1018px;background:#58585c"></div>
<div style="position:absolute;left:0;top:0;font-family:'Liberation Mono', monospace;font-size:23.33px;color:#a9b7c6;-webkit-text-stroke:0.25px"><div style="position:absolute;left:570.0px;top:178px;height:30px;line-height:30px;white-space:pre"><b style="color:#cc7832">def</b> <span style="color:#ffc66d">create</span></div><div style="position:absolute;left:598.0px;top:208px;height:30px;line-height:30px;white-space:pre"><span style="color:#9876aa">@article</span><span style="color:#a9b7c6"> = </span><span style="color:#f2f2f2">Article</span><span style="color:#a9b7c6">.new(</span><span style="color:#a9b7c6">article_params</span><span style="color:#a9b7c6">)</span></div><div style="position:absolute;left:570.0px;top:238px;height:30px;line-height:30px;white-space:pre"></div><div style="position:absolute;left:598.0px;top:268px;height:30px;line-height:30px;white-space:pre"><b style="color:#cc7832">if</b> <span style="color:#9876aa">@article</span><span style="color:#a9b7c6">.save</span></div><div style="position:absolute;left:626.0px;top:298px;height:30px;line-height:30px;white-space:pre"><span style="color:#eea634">redirect_to</span><span style="color:#a9b7c6"> root_url</span></div><div style="position:absolute;left:598.0px;top:328px;height:30px;line-height:30px;white-space:pre"><b style="color:#cc7832">else</b></div><div style="position:absolute;left:626.0px;top:358px;height:30px;line-height:30px;white-space:pre"><span style="color:#eea634">render</span> <span style="color:#6a8759">&#x27;new&#x27;</span></div><div style="position:absolute;left:598.0px;top:388px;height:30px;line-height:30px;white-space:pre"><b style="color:#cc7832">end</b></div><div style="position:absolute;left:570.0px;top:418px;height:30px;line-height:30px;white-space:pre"><b style="color:#cc7832">end</b></div><div style="position:absolute;left:570.0px;top:448px;height:30px;line-height:30px;white-space:pre"></div><div style="position:absolute;left:570.0px;top:478px;height:30px;line-height:30px;white-space:pre"><b style="color:#cc7832">def</b> <span style="color:#ffc66d">update</span></div><div style="position:absolute;left:598.0px;top:508px;height:30px;line-height:30px;white-space:pre"><b style="color:#cc7832">if</b> <span style="color:#9876aa">@article</span><span style="color:#a9b7c6">.update(</span><span style="color:#a9b7c6">article_params</span><span style="color:#a9b7c6">)</span></div><div style="position:absolute;left:626.0px;top:538px;height:30px;line-height:30px;white-space:pre"><span style="color:#a9b7c6">flash[:success] = </span><span style="color:#6a8759">&quot;Article was successfully updated&quot;</span></div><div style="position:absolute;left:626.0px;top:568px;height:30px;line-height:30px;white-space:pre"><span style="color:#eea634">redirect_to</span><span style="color:#a9b7c6"> article_path(</span><span style="color:#9876aa">@article</span><span style="color:#a9b7c6">)</span></div><div style="position:absolute;left:598.0px;top:598px;height:30px;line-height:30px;white-space:pre"><b style="color:#cc7832">else</b></div><div style="position:absolute;left:626.0px;top:628px;height:30px;line-height:30px;white-space:pre"><span style="color:#eea634">render</span> <span style="color:#6a8759">&#x27;edit&#x27;</span></div><div style="position:absolute;left:598.0px;top:658px;height:30px;line-height:30px;white-space:pre"><b style="color:#cc7832">end</b></div><div style="position:absolute;left:570.0px;top:688px;height:30px;line-height:30px;white-space:pre"><b style="color:#cc7832">end</b></div><div style="position:absolute;left:570.0px;top:718px;height:30px;line-height:30px;white-space:pre"></div><div style="position:absolute;left:570.0px;top:748px;height:30px;line-height:30px;white-space:pre"><b style="color:#cc7832">def</b> <span style="color:#ffc66d">show</span></div><div style="position:absolute;left:570.0px;top:778px;height:30px;line-height:30px;white-space:pre"><b style="color:#cc7832">end</b></div><div style="position:absolute;left:570.0px;top:808px;height:30px;line-height:30px;white-space:pre"></div><div style="position:absolute;left:570.0px;top:838px;height:30px;line-height:30px;white-space:pre"><b style="color:#cc7832">def</b> <span style="color:#ffc66d">destroy</span></div><div style="position:absolute;left:598.0px;top:868px;height:30px;line-height:30px;white-space:pre"><span style="color:#9876aa">@article</span><span style="color:#a9b7c6">.destroy</span></div><div style="position:absolute;left:598.0px;top:898px;height:30px;line-height:30px;white-space:pre"><span style="color:#a9b7c6">flash[:danger] = </span><span style="color:#6a8759">&quot;Article was successfully deleted&quot;</span></div><div style="position:absolute;left:598.0px;top:928px;height:30px;line-height:30px;white-space:pre"><span style="color:#eea634">redirect_to</span><span style="color:#a9b7c6"> articles_path</span></div><div style="position:absolute;left:570.0px;top:958px;height:30px;line-height:30px;white-space:pre"><b style="color:#cc7832">end</b></div><div style="position:absolute;left:570.0px;top:988px;height:30px;line-height:30px;white-space:pre"></div><div style="position:absolute;left:570.0px;top:1018px;height:30px;line-height:30px;white-space:pre"><span style="color:#eea634">private</span></div><div style="position:absolute;left:598.0px;top:1048px;height:30px;line-height:30px;white-space:pre"><b style="color:#cc7832">def</b> <span style="color:#ffc66d">set_article</span></div><div style="position:absolute;left:626.0px;top:1078px;height:30px;line-height:30px;white-space:pre"><span style="color:#9876aa">@article</span><span style="color:#a9b7c6"> = </span><span style="color:#f2f2f2">Article</span><span style="color:#a9b7c6">.</span><span style="color:#eea634">find</span><span style="color:#a9b7c6">(params[:id])</span></div><div style="position:absolute;left:598.0px;top:1108px;height:30px;line-height:30px;white-space:pre"><b style="color:#cc7832">end</b></div></div>
<div style="position:absolute;left:575px;top:236px;width:1px;height:180px;background:#3b3b3e"></div>
<div style="position:absolute;left:603px;top:296px;width:1px;height:30px;background:#3b3b3e"></div>
<div style="position:absolute;left:603px;top:356px;width:1px;height:30px;background:#3b3b3e"></div>
<div style="position:absolute;left:575px;top:506px;width:1px;height:180px;background:#3b3b3e"></div>
<div style="position:absolute;left:603px;top:536px;width:1px;height:60px;background:#3b3b3e"></div>
<div style="position:absolute;left:603px;top:626px;width:1px;height:30px;background:#3b3b3e"></div>
<div style="position:absolute;left:575px;top:866px;width:1px;height:90px;background:#3b3b3e"></div>
<div style="position:absolute;left:575px;top:1046px;width:1px;height:122px;background:#3b3b3e"></div>
<div style="position:absolute;left:603px;top:1076px;width:1px;height:30px;background:#3b3b3e"></div>
<svg style="position:absolute;left:521px;top:185px" width="20" height="21" viewBox="0 0 20 21"><path d="M2.5 1 H17.5 V12.5 L10 19.5 L2.5 12.5 Z" fill="#2b2b2e" stroke="#6a6a6e" stroke-width="1.7"/><path d="M6 9 H14" stroke="#6a6a6e" stroke-width="1.7"/></svg>
<svg style="position:absolute;left:521px;top:275px" width="20" height="21" viewBox="0 0 20 21"><path d="M2.5 1 H17.5 V12.5 L10 19.5 L2.5 12.5 Z" fill="#2b2b2e" stroke="#6a6a6e" stroke-width="1.7"/><path d="M6 9 H14" stroke="#6a6a6e" stroke-width="1.7"/></svg>
<svg style="position:absolute;left:521px;top:485px" width="20" height="21" viewBox="0 0 20 21"><path d="M2.5 1 H17.5 V12.5 L10 19.5 L2.5 12.5 Z" fill="#2b2b2e" stroke="#6a6a6e" stroke-width="1.7"/><path d="M6 9 H14" stroke="#6a6a6e" stroke-width="1.7"/></svg>
<svg style="position:absolute;left:521px;top:515px" width="20" height="21" viewBox="0 0 20 21"><path d="M2.5 1 H17.5 V12.5 L10 19.5 L2.5 12.5 Z" fill="#2b2b2e" stroke="#6a6a6e" stroke-width="1.7"/><path d="M6 9 H14" stroke="#6a6a6e" stroke-width="1.7"/></svg>
<svg style="position:absolute;left:521px;top:755px" width="20" height="21" viewBox="0 0 20 21"><path d="M2.5 1 H17.5 V12.5 L10 19.5 L2.5 12.5 Z" fill="#2b2b2e" stroke="#6a6a6e" stroke-width="1.7"/><path d="M6 9 H14" stroke="#6a6a6e" stroke-width="1.7"/></svg>
<svg style="position:absolute;left:521px;top:845px" width="20" height="21" viewBox="0 0 20 21"><path d="M2.5 1 H17.5 V12.5 L10 19.5 L2.5 12.5 Z" fill="#2b2b2e" stroke="#6a6a6e" stroke-width="1.7"/><path d="M6 9 H14" stroke="#6a6a6e" stroke-width="1.7"/></svg>
<svg style="position:absolute;left:521px;top:1055px" width="20" height="21" viewBox="0 0 20 21"><path d="M2.5 1 H17.5 V12.5 L10 19.5 L2.5 12.5 Z" fill="#2b2b2e" stroke="#6a6a6e" stroke-width="1.7"/><path d="M6 9 H14" stroke="#6a6a6e" stroke-width="1.7"/></svg>
<svg style="position:absolute;left:521px;top:392px" width="20" height="21" viewBox="0 0 20 21"><path d="M2.5 19 H17.5 V7.5 L10 1 L2.5 7.5 Z" fill="#2b2b2e" stroke="#6a6a6e" stroke-width="1.7"/><path d="M6 12 H14" stroke="#6a6a6e" stroke-width="1.7"/></svg>
<svg style="position:absolute;left:521px;top:422px" width="20" height="21" viewBox="0 0 20 21"><path d="M2.5 19 H17.5 V7.5 L10 1 L2.5 7.5 Z" fill="#2b2b2e" stroke="#6a6a6e" stroke-width="1.7"/><path d="M6 12 H14" stroke="#6a6a6e" stroke-width="1.7"/></svg>
<svg style="position:absolute;left:521px;top:662px" width="20" height="21" viewBox="0 0 20 21"><path d="M2.5 19 H17.5 V7.5 L10 1 L2.5 7.5 Z" fill="#2b2b2e" stroke="#6a6a6e" stroke-width="1.7"/><path d="M6 12 H14" stroke="#6a6a6e" stroke-width="1.7"/></svg>
<svg style="position:absolute;left:521px;top:692px" width="20" height="21" viewBox="0 0 20 21"><path d="M2.5 19 H17.5 V7.5 L10 1 L2.5 7.5 Z" fill="#2b2b2e" stroke="#6a6a6e" stroke-width="1.7"/><path d="M6 12 H14" stroke="#6a6a6e" stroke-width="1.7"/></svg>
<svg style="position:absolute;left:521px;top:782px" width="20" height="21" viewBox="0 0 20 21"><path d="M2.5 19 H17.5 V7.5 L10 1 L2.5 7.5 Z" fill="#2b2b2e" stroke="#6a6a6e" stroke-width="1.7"/><path d="M6 12 H14" stroke="#6a6a6e" stroke-width="1.7"/></svg>
<svg style="position:absolute;left:521px;top:962px" width="20" height="21" viewBox="0 0 20 21"><path d="M2.5 19 H17.5 V7.5 L10 1 L2.5 7.5 Z" fill="#2b2b2e" stroke="#6a6a6e" stroke-width="1.7"/><path d="M6 12 H14" stroke="#6a6a6e" stroke-width="1.7"/></svg>
<svg style="position:absolute;left:521px;top:1112px" width="20" height="21" viewBox="0 0 20 21"><path d="M2.5 19 H17.5 V7.5 L10 1 L2.5 7.5 Z" fill="#2b2b2e" stroke="#6a6a6e" stroke-width="1.7"/><path d="M6 12 H14" stroke="#6a6a6e" stroke-width="1.7"/></svg>
<svg style="position:absolute;left:476px;top:177px" width="28" height="26" viewBox="0 0 28 26"><path d="M2.8 3 H12.5 L16 6.5 V21 H2.8 Z" fill="#2a2a2c" stroke="#a9a9ac" stroke-width="2"/><path d="M5.5 12 C5.5 9.5 8 9 9.4 11 C10.8 9 13.3 9.5 13.3 12 C13.3 14 9.4 17.5 9.4 17.5 C9.4 17.5 5.5 14 5.5 12 Z" fill="#e5484a"/><path d="M21 1 V21" stroke="#a9a9ac" stroke-width="2"/><path d="M16 18.5 H26 L21 25 Z" fill="#a9a9ac"/></svg>
<svg style="position:absolute;left:476px;top:477px" width="28" height="26" viewBox="0 0 28 26"><path d="M2.8 3 H12.5 L16 6.5 V21 H2.8 Z" fill="#2a2a2c" stroke="#a9a9ac" stroke-width="2"/><path d="M5.5 12 C5.5 9.5 8 9 9.4 11 C10.8 9 13.3 9.5 13.3 12 C13.3 14 9.4 17.5 9.4 17.5 C9.4 17.5 5.5 14 5.5 12 Z" fill="#e5484a"/><path d="M21 1 V21" stroke="#a9a9ac" stroke-width="2"/><path d="M16 18.5 H26 L21 25 Z" fill="#a9a9ac"/></svg>
<svg style="position:absolute;left:476px;top:747px" width="28" height="26" viewBox="0 0 28 26"><path d="M2.8 3 H12.5 L16 6.5 V21 H2.8 Z" fill="#2a2a2c" stroke="#a9a9ac" stroke-width="2"/><path d="M5.5 12 C5.5 9.5 8 9 9.4 11 C10.8 9 13.3 9.5 13.3 12 C13.3 14 9.4 17.5 9.4 17.5 C9.4 17.5 5.5 14 5.5 12 Z" fill="#e5484a"/><path d="M21 1 V21" stroke="#a9a9ac" stroke-width="2"/><path d="M16 18.5 H26 L21 25 Z" fill="#a9a9ac"/></svg>
<svg style="position:absolute;left:476px;top:837px" width="28" height="26" viewBox="0 0 28 26"><path d="M2.8 3 H12.5 L16 6.5 V21 H2.8 Z" fill="#2a2a2c" stroke="#a9a9ac" stroke-width="2"/><path d="M5.5 12 C5.5 9.5 8 9 9.4 11 C10.8 9 13.3 9.5 13.3 12 C13.3 14 9.4 17.5 9.4 17.5 C9.4 17.5 5.5 14 5.5 12 Z" fill="#e5484a"/><path d="M21 1 V21" stroke="#a9a9ac" stroke-width="2"/><path d="M16 18.5 H26 L21 25 Z" fill="#a9a9ac"/></svg>
<div style="position:absolute;left:966px;top:250px;width:640px;height:592px;background:#3f3f43;box-shadow:0 4px 14px 4px rgba(0,0,0,0.45)"></div>
<div style="position:absolute;left:966px;top:250px;width:640px;height:46px;background:#4e4f52"></div>
<div style="position:absolute;left:970px;top:257px;width:640px;text-align:center;font-family:'Liberation Sans', sans-serif;font-size:26px;line-height:30px;letter-spacing:0.5px;color:#c8c8c8">VCS Operations</div>
<div style="position:absolute;left:966px;top:318px;width:292.0px;height:2px;background:#555558"></div><div style="position:absolute;left:1314.0px;top:318px;width:292.0px;height:2px;background:#555558"></div><div style="position:absolute;left:966px;top:301px;width:640px;text-align:center;font-family:'Liberation Sans', sans-serif;font-size:26px;line-height:34px;font-weight:bold;letter-spacing:0.3px;color:#8b8b8e">Git</div>
<div style="position:absolute;left:966px;top:336px;width:640px;height:38px;background:#2f65ca"></div>
<div style="position:absolute;left:966px;top:452px;width:640px;height:2px;background:#555558"></div>
<div style="position:absolute;left:966px;top:572px;width:640px;height:2px;background:#555558"></div>
<div style="position:absolute;left:966px;top:746px;width:224.0px;height:2px;background:#555558"></div><div style="position:absolute;left:1382.0px;top:746px;width:224.0px;height:2px;background:#555558"></div><div style="position:absolute;left:966px;top:729px;width:640px;text-align:center;font-family:'Liberation Sans', sans-serif;font-size:26px;line-height:34px;font-weight:bold;letter-spacing:0.3px;color:#8b8b8e">Local History</div>
<svg style="position:absolute;left:984px;top:342px" width="27" height="22" viewBox="0 0 27 22"><path d="M2 11 L9 18 L25 2" stroke="#499c54" stroke-width="4.2" fill="none"/></svg>
<div style="position:absolute;left:1020px;top:338.56px;font-family:'Liberation Sans', sans-serif;font-size:27px;line-height:32.40px;height:32.40px;color:#ffffff;font-weight:normal;letter-spacing:0.3px;white-space:pre;-webkit-text-stroke:0.42px #ffffff;">1. Commit...</div>

<div style="position:absolute;left:1020px;top:376.56px;font-family:'Liberation Sans', sans-serif;font-size:27px;line-height:32.40px;height:32.40px;color:#c8c8c8;font-weight:normal;letter-spacing:0.3px;white-space:pre;-webkit-text-stroke:0.42px #c8c8c8;">2. Commit File...</div>
<svg style="position:absolute;left:984px;top:417px" width="27" height="26" viewBox="0 0 27 26"><path d="M8 8 H16 C21 8 25 11.5 25 16.5 C25 21.5 21 25 16 25 H9" stroke="#b8b8ba" stroke-width="3" fill="none"/><path d="M0.5 8 L9.5 0 V16 Z" fill="#b8b8ba"/></svg>
<div style="position:absolute;left:1020px;top:414.56px;font-family:'Liberation Sans', sans-serif;font-size:27px;line-height:32.40px;height:32.40px;color:#c8c8c8;font-weight:normal;letter-spacing:0.3px;white-space:pre;-webkit-text-stroke:0.42px #c8c8c8;">3. Revert...</div>
<svg style="position:absolute;left:981px;top:460px" width="29" height="29" viewBox="0 0 29 29"><circle cx="14.5" cy="14.5" r="12.5" stroke="#b8b8ba" stroke-width="3" fill="none"/><path d="M13 8 V15 L18 20" stroke="#b8b8ba" stroke-width="3" fill="none"/></svg>
<div style="position:absolute;left:1020px;top:458.56px;font-family:'Liberation Sans', sans-serif;font-size:27px;line-height:32.40px;height:32.40px;color:#c8c8c8;font-weight:normal;letter-spacing:0.3px;white-space:pre;-webkit-text-stroke:0.42px #c8c8c8;">4. Show History</div>

<div style="position:absolute;left:1020px;top:496.56px;font-family:'Liberation Sans', sans-serif;font-size:27px;line-height:32.40px;height:32.40px;color:#c8c8c8;font-weight:normal;letter-spacing:0.3px;white-space:pre;-webkit-text-stroke:0.42px #c8c8c8;">5. Annotate</div>
<svg style="position:absolute;left:982px;top:536px" width="28" height="28" viewBox="0 0 28 28"><g fill="#3d9ad6"><rect x="15.6" y="6" width="12.4" height="4.5"/><path d="M12 8.2 L19.7 0 V16.5 Z"/><rect x="0" y="18" width="8.4" height="4.5"/><path d="M16 20.2 L8.4 12 V28.5 Z"/></g></svg>
<div style="position:absolute;left:1020px;top:534.57px;font-family:'Liberation Sans', sans-serif;font-size:27px;line-height:32.40px;height:32.40px;color:#c8c8c8;font-weight:normal;letter-spacing:0.3px;white-space:pre;-webkit-text-stroke:0.42px #c8c8c8;">6. Compare with the Same Repository Version</div>
<svg style="position:absolute;left:985px;top:580px" width="22" height="28" viewBox="0 0 22 28"><g fill="#b8b8ba"><circle cx="5" cy="3.5" r="4"/><circle cx="5" cy="24" r="4"/><circle cx="17.2" cy="8" r="4"/><rect x="3" y="3.5" width="4" height="20.5"/><path d="M5 16.3 H17.2 V8" stroke="#b8b8ba" stroke-width="4" fill="none"/></g></svg>
<div style="position:absolute;left:1020px;top:578.57px;font-family:'Liberation Sans', sans-serif;font-size:27px;line-height:32.40px;height:32.40px;color:#c8c8c8;font-weight:normal;letter-spacing:0.3px;white-space:pre;-webkit-text-stroke:0.42px #c8c8c8;">7. Branches...</div>
<svg style="position:absolute;left:984px;top:620px" width="24" height="24" viewBox="0 0 24 24"><path d="M1.5 20 L15 6.5" stroke="#4ba85a" stroke-width="4.4"/><path d="M8 0.5 H21.8 V14 Z" fill="#4ba85a"/></svg>
<div style="position:absolute;left:1020px;top:616.57px;font-family:'Liberation Sans', sans-serif;font-size:27px;line-height:32.40px;height:32.40px;color:#c8c8c8;font-weight:normal;letter-spacing:0.3px;white-space:pre;-webkit-text-stroke:0.42px #c8c8c8;">8. Push...</div>

<div style="position:absolute;left:1020px;top:654.57px;font-family:'Liberation Sans', sans-serif;font-size:27px;line-height:32.40px;height:32.40px;color:#c8c8c8;font-weight:normal;letter-spacing:0.3px;white-space:pre;-webkit-text-stroke:0.42px #c8c8c8;">9. Stash Changes...</div>

<div style="position:absolute;left:1020px;top:692.57px;font-family:'Liberation Sans', sans-serif;font-size:27px;line-height:32.40px;height:32.40px;color:#c8c8c8;font-weight:normal;letter-spacing:0.3px;white-space:pre;-webkit-text-stroke:0.42px #c8c8c8;">0. UnStash Changes...</div>

<div style="position:absolute;left:1020px;top:766.57px;font-family:'Liberation Sans', sans-serif;font-size:27px;line-height:32.40px;height:32.40px;color:#c8c8c8;font-weight:normal;letter-spacing:0.3px;white-space:pre;-webkit-text-stroke:0.42px #c8c8c8;">Show History</div>

<div style="position:absolute;left:1020px;top:804.57px;font-family:'Liberation Sans', sans-serif;font-size:27px;line-height:32.40px;height:32.40px;color:#c8c8c8;font-weight:normal;letter-spacing:0.3px;white-space:pre;-webkit-text-stroke:0.42px #c8c8c8;">Put Label...</div>
<svg style="position:absolute;left:1544px;top:344px" width="22" height="22" viewBox="0 0 22 22"><g stroke="#ffffff" stroke-width="2.1" fill="none"><path d="M7.3 4.3 V17.7 M14.7 4.3 V17.7 M4.3 7.3 H17.7 M4.3 14.7 H17.7"/><circle cx="4.4" cy="4.4" r="2.9"/><circle cx="17.6" cy="4.4" r="2.9"/><circle cx="4.4" cy="17.6" r="2.9"/><circle cx="17.6" cy="17.6" r="2.9"/></g></svg>
<div style="position:absolute;left:1567px;top:338.56px;font-family:'Liberation Sans', sans-serif;font-size:27px;line-height:32.40px;height:32.40px;color:#ffffff;font-weight:normal;letter-spacing:0px;white-space:pre;-webkit-text-stroke:0.42px #ffffff;">K</div>
<svg style="position:absolute;left:1518px;top:420px" width="23" height="21" viewBox="0 0 23 21"><path d="M1 2 H7.5 L15.5 19 H22 M13.5 2 H22" stroke="#c8c8c8" stroke-width="2.3" fill="none"/></svg>
<svg style="position:absolute;left:1544px;top:420px" width="22" height="22" viewBox="0 0 22 22"><g stroke="#c8c8c8" stroke-width="2.1" fill="none"><path d="M7.3 4.3 V17.7 M14.7 4.3 V17.7 M4.3 7.3 H17.7 M4.3 14.7 H17.7"/><circle cx="4.4" cy="4.4" r="2.9"/><circle cx="17.6" cy="4.4" r="2.9"/><circle cx="4.4" cy="17.6" r="2.9"/><circle cx="17.6" cy="17.6" r="2.9"/></g></svg>
<div style="position:absolute;left:1568px;top:415.56px;font-family:'Liberation Sans', sans-serif;font-size:27px;line-height:32.40px;height:32.40px;color:#c8c8c8;font-weight:normal;letter-spacing:0px;white-space:pre;-webkit-text-stroke:0.42px #c8c8c8;">Z</div>
<svg style="position:absolute;left:1521px;top:583px" width="23" height="22" viewBox="0 0 23 22"><path d="M11.5 1.5 L21.5 11.2 H16.3 V20.5 H6.7 V11.2 H1.5 Z" stroke="#c8c8c8" stroke-width="2.1" fill="none" stroke-linejoin="miter"/></svg>
<svg style="position:absolute;left:1548px;top:583px" width="22" height="22" viewBox="0 0 22 22"><g stroke="#c8c8c8" stroke-width="2.1" fill="none"><path d="M7.3 4.3 V17.7 M14.7 4.3 V17.7 M4.3 7.3 H17.7 M4.3 14.7 H17.7"/><circle cx="4.4" cy="4.4" r="2.9"/><circle cx="17.6" cy="4.4" r="2.9"/><circle cx="4.4" cy="17.6" r="2.9"/><circle cx="17.6" cy="17.6" r="2.9"/></g></svg>
<div style="position:absolute;left:1578px;top:577.57px;font-family:'Liberation Sans', sans-serif;font-size:27px;line-height:32.40px;height:32.40px;color:#c8c8c8;font-weight:normal;letter-spacing:0px;white-space:pre;-webkit-text-stroke:0.42px #c8c8c8;">`</div>
<svg style="position:absolute;left:1518px;top:621px" width="23" height="22" viewBox="0 0 23 22"><path d="M11.5 1.5 L21.5 11.2 H16.3 V20.5 H6.7 V11.2 H1.5 Z" stroke="#c8c8c8" stroke-width="2.1" fill="none" stroke-linejoin="miter"/></svg>
<svg style="position:absolute;left:1544px;top:621px" width="22" height="22" viewBox="0 0 22 22"><g stroke="#c8c8c8" stroke-width="2.1" fill="none"><path d="M7.3 4.3 V17.7 M14.7 4.3 V17.7 M4.3 7.3 H17.7 M4.3 14.7 H17.7"/><circle cx="4.4" cy="4.4" r="2.9"/><circle cx="17.6" cy="4.4" r="2.9"/><circle cx="4.4" cy="17.6" r="2.9"/><circle cx="17.6" cy="17.6" r="2.9"/></g></svg>
<div style="position:absolute;left:1567px;top:616.57px;font-family:'Liberation Sans', sans-serif;font-size:27px;line-height:32.40px;height:32.40px;color:#c8c8c8;font-weight:normal;letter-spacing:0px;white-space:pre;-webkit-text-stroke:0.42px #c8c8c8;">K</div>
</body></html>
